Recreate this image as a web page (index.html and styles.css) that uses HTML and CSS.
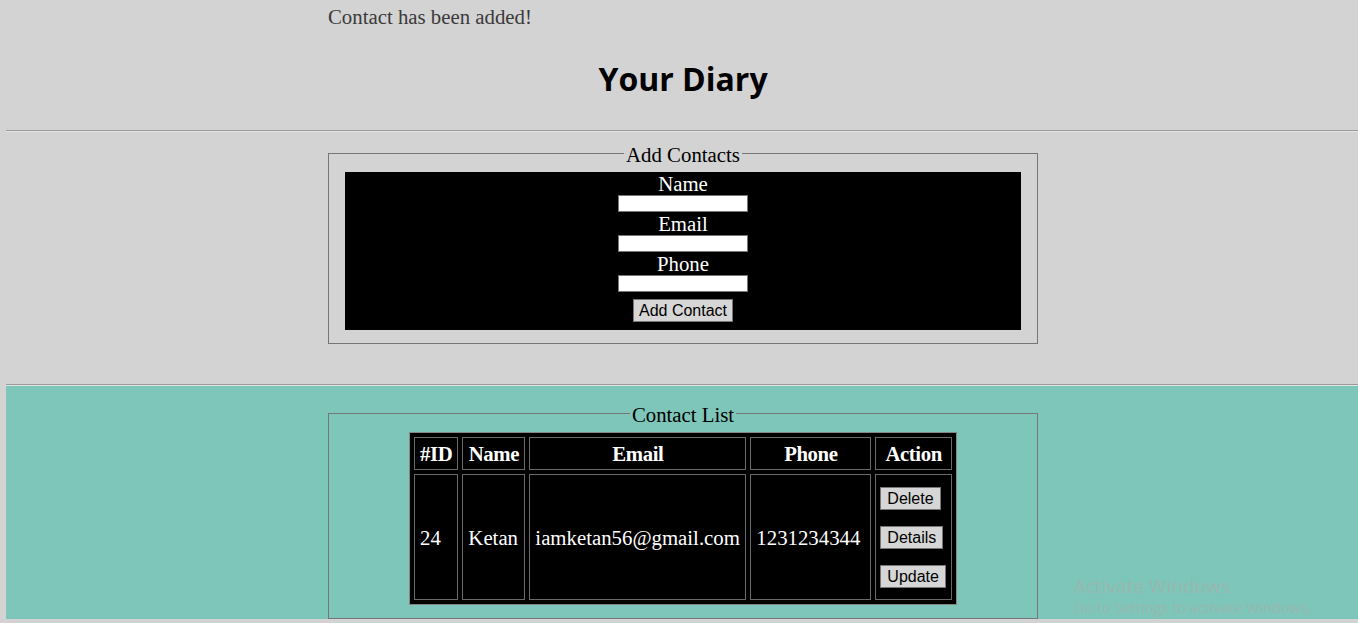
FILE: index.html
```html
<!DOCTYPE html>
<html lang="en">
<head>
<meta charset="utf-8">
<title>Your Diary</title>
<link rel="stylesheet" href="styles.css">
</head>
<body>
<div class="page">
  <header class="top">
    <p class="msg">Contact has been added!</p>
    <h1 class="title">Your Diary</h1>
  </header>
  <hr class="rule">
  <section class="add-section">
    <fieldset class="box">
      <legend class="box-legend">Add Contacts</legend>
      <form class="form">
        <label class="form-label" for="name">Name</label>
        <input class="form-input" id="name" type="text">
        <label class="form-label" for="email">Email</label>
        <input class="form-input" id="email" type="text">
        <label class="form-label" for="phone">Phone</label>
        <input class="form-input" id="phone" type="text">
        <button class="btn form-btn" type="button">Add Contact</button>
      </form>
    </fieldset>
  </section>
  <hr class="rule">
  <section class="list-section">
    <fieldset class="box">
      <legend class="box-legend">Contact List</legend>
      <table class="contacts">
        <thead>
          <tr>
            <th class="col-id">#ID</th>
            <th class="col-name">Name</th>
            <th class="col-email">Email</th>
            <th class="col-phone">Phone</th>
            <th class="col-action">Action</th>
          </tr>
        </thead>
        <tbody>
          <tr>
            <td>24</td>
            <td>Ketan</td>
            <td>iamketan56@gmail.com</td>
            <td>1231234344</td>
            <td class="action-cell">
              <div class="actions">
                <button class="btn" type="button">Delete</button>
                <button class="btn" type="button">Details</button>
                <button class="btn" type="button">Update</button>
              </div>
            </td>
          </tr>
        </tbody>
      </table>
    </fieldset>
    <div class="watermark">
      <div class="wm-title">Activate Windows</div>
      <div class="wm-sub">Go to Settings to activate Windows.</div>
    </div>
  </section>
</div>
</body>
</html>
```
FILE: styles.css
```css
html {
  overflow: hidden;
}

body {
  margin: 0;
  background: #d3d3d3;
  font-family: "Liberation Serif", "Times New Roman", serif;
  font-size: 20.8px;
  color: #000;
}

.page {
  margin-left: 6px;
  width: 1354px;
}

.top {
  width: 710px;
  margin: 0 auto;
}

.msg {
  margin: 5px 0 0;
  line-height: 23px;
  color: #3a3a3a;
}

.title {
  margin: 31px 0;
  font-family: "Open Sans", Lato, sans-serif;
  font-size: 32px;
  line-height: 40px;
  font-weight: 700;
  text-align: center;
}

.rule {
  margin: 0;
  height: 0;
  border: 0;
  border-top: 1px solid #9b9b9b;
  border-bottom: 1px solid #e4e4e4;
}

.add-section {
  padding: 8px 0 40px;
}

.box {
  width: 710px;
  box-sizing: border-box;
  margin: 0 auto;
  border: 1px solid #767676;
  padding: 6px 16px 13px;
  min-inline-size: auto;
}

.box-legend {
  margin: 0 auto;
  padding: 3px 2px 0;
  line-height: 23px;
}

.form {
  display: flex;
  flex-direction: column;
  align-items: center;
  background: #000;
  color: #fff;
  padding: 0 0 8px;
}

.form-label {
  display: block;
  line-height: 23px;
}

.form-input {
  display: block;
  box-sizing: border-box;
  width: 130px;
  height: 17px;
  margin: 0;
  padding: 0 2px;
  border: 1px solid #767676;
  background: #fff;
}

.btn {
  box-sizing: border-box;
  height: 23px;
  margin: 0;
  padding: 1px 6px;
  border: 1px solid #767676;
  border-radius: 0;
  background: #d6d6d6;
  color: #000;
  font-family: "Liberation Sans", Arial, sans-serif;
  font-size: 16px;
  line-height: 19px;
}

.form-btn {
  margin-top: 7px;
  padding: 1px 5px;
}

.list-section {
  position: relative;
  overflow: hidden;
  padding-top: 14px;
  background: #7dc6b9;
}

.contacts {
  margin: 0 auto;
  border: 1px solid #858585;
  border-spacing: 4px;
  background: #000;
  color: #fff;
}

.contacts th,
.contacts td {
  border: 1px solid #6a6a6a;
  padding: 5px;
}

.contacts th {
  line-height: 21px;
  font-weight: 700;
  letter-spacing: -0.4px;
}

.contacts td {
  line-height: 23px;
  text-align: left;
}

.col-id { width: 32px; }
.col-name { width: 51px; }
.col-email { width: 205px; }
.col-phone { width: 109px; }
.col-action { width: 63px; }

.contacts .action-cell {
  padding-left: 4px;
}

.actions {
  display: flex;
  flex-direction: column;
  align-items: flex-start;
  gap: 16px;
  padding: 7px 0 6px;
}

.watermark {
  position: absolute;
  left: 1068px;
  top: 188px;
  color: #98b7b1;
  font-family: "Open Sans", "Noto Sans", sans-serif;
  pointer-events: none;
}

.wm-title {
  font-size: 19px;
  line-height: 24px;
}

.wm-sub {
  margin-top: 1px;
  font-size: 14.5px;
  line-height: 18px;
}
```
